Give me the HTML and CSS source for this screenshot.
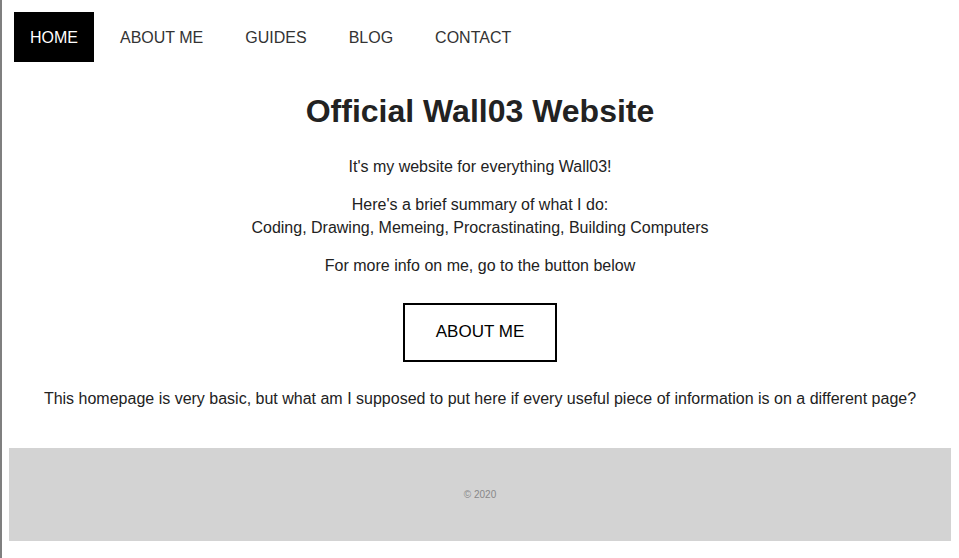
FILE: index.html
```html
<!DOCTYPE html>
<html lang="en">
<head>
<meta charset="utf-8">
<title>Official Wall03 Website</title>
<link rel="stylesheet" href="styles.css">
</head>
<body>
<nav class="topnav">
  <a class="navlink active" href="#">HOME</a>
  <a class="navlink" href="#">ABOUT ME</a>
  <a class="navlink" href="#">GUIDES</a>
  <a class="navlink" href="#">BLOG</a>
  <a class="navlink" href="#">CONTACT</a>
</nav>
<main class="content">
  <h1 class="title">Official Wall03 Website</h1>
  <p class="text">It's my website for everything Wall03!</p>
  <p class="text">Here's a brief summary of what I do:<br>Coding, Drawing, Memeing, Procrastinating, Building Computers</p>
  <p class="text">For more info on me, go to the button below</p>
  <a class="btn" href="#">ABOUT ME</a>
  <p class="text last">This homepage is very basic, but what am I supposed to put here if every useful piece of information is on a different page?</p>
</main>
<footer class="footer">
  <p class="copy">&copy; 2020</p>
</footer>
</body>
</html>
```

FILE: styles.css
```css
html {
  border-left: 2px solid #7f7f7f;
  min-height: 100%;
  background: #fff;
}
body {
  margin: 8px 8px 8px 7px;
  font-family: "Liberation Sans", Arial, sans-serif;
  color: #222;
}
.topnav {
  display: flex;
  gap: 10px;
  padding: 4px 5px 0;
}
.navlink {
  display: block;
  padding: 17px 16px 15px;
  font-size: 16px;
  line-height: 18px;
  color: #333;
  text-decoration: none;
}
.navlink.active {
  background: #000;
  color: #fff;
}
.content {
  text-align: center;
  padding-bottom: 38px;
}
.title {
  font-size: 32px;
  line-height: 37px;
  margin: 31px 0 0;
  color: #222;
}
.text {
  font-size: 16px;
  line-height: 23px;
  margin: 15px 0 0;
}
.title + .text {
  margin-top: 25px;
}
.btn {
  display: inline-block;
  margin-top: 26px;
  padding: 17px 31px 18px;
  border: 2px solid #000;
  font-size: 17px;
  line-height: 20px;
  color: #000;
  text-decoration: none;
}
.text.last {
  margin-top: 25px;
}
.footer {
  background: #d3d3d3;
  height: 93px;
  display: flex;
  align-items: center;
  justify-content: center;
}
.copy {
  margin: 0;
  font-size: 10px;
  color: #888;
}
```
